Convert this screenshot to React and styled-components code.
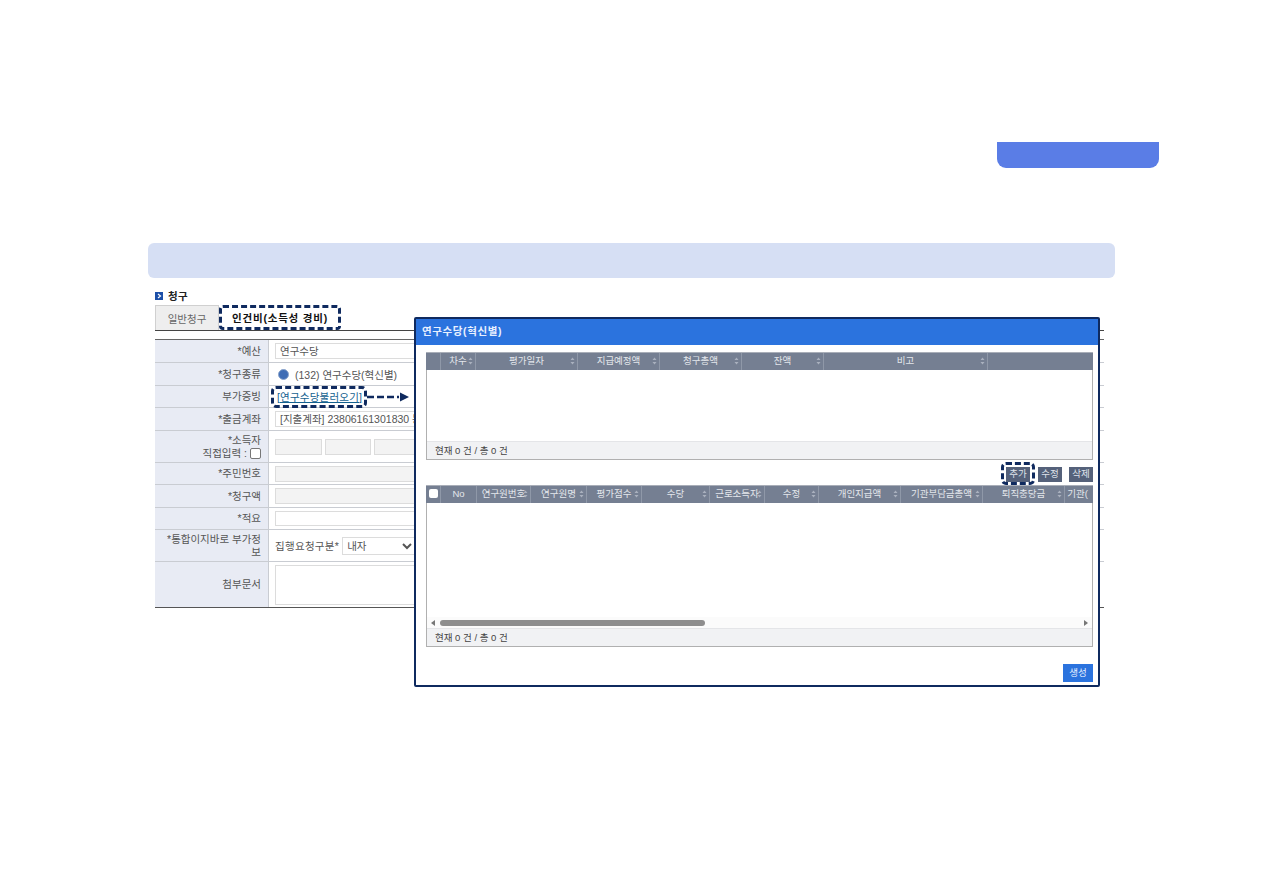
import React from 'react';
import styled, { createGlobalStyle } from 'styled-components';

const GlobalStyle = createGlobalStyle`
  html, body {
    margin: 0;
    padding: 0;
    background: #fff;
  }
  body {
    font-family: "Liberation Sans", "Noto Sans CJK KR", sans-serif;
    font-size: 10px;
    color: #444;
  }
  * {
    box-sizing: border-box;
  }
`;

const Page = styled.div`
  width: 1263px;
  height: 893px;
  padding-top: 142px;
  overflow: hidden;
`;

const TopBadgeRow = styled.div`
  display: flex;
  justify-content: flex-end;
  padding-right: 104px;
`;

const TopBadge = styled.div`
  width: 162px;
  height: 26px;
  background: #5a7de6;
  border-radius: 0 0 9px 9px;
`;

const Banner = styled.div`
  width: 967px;
  height: 35px;
  margin: 75px 0 0 148px;
  background: #d6dff4;
  border-radius: 6px;
`;

const Content = styled.div`
  position: relative;
  width: 949px;
  margin: 12px 0 0 155px;
`;

const SectionTitle = styled.div`
  display: flex;
  align-items: center;
  gap: 5px;
  height: 11px;
  margin-bottom: 4px;
  font-size: 10.5px;
  font-weight: 700;
  letter-spacing: 0.4px;
  color: #222;
`;

const SectionMark = styled.span`
  display: flex;
  align-items: center;
  justify-content: center;
  width: 8px;
  height: 8px;
  background: #1c4fa8;
`;

const TabBar = styled.div`
  display: flex;
  height: 26px;
  border-bottom: 1px solid #444;
`;

const Tab = styled.div`
  width: 64px;
  height: 25px;
  padding-top: 5px;
  text-align: center;
  font-size: 10.5px;
  color: #666;
  background: #eeeeee;
  border: 1px solid #d0d0d0;
  border-bottom: 0;
`;

const ActiveTab = styled.div`
  width: 122px;
  height: 25px;
  padding-top: 4px;
  text-align: center;
  font-size: 10.5px;
  font-weight: 700;
  letter-spacing: 0.8px;
  color: #111;
  background: #fff;
  border: 3px dashed #0f2a5f;
  border-radius: 4px;
  line-height: 13px;
`;

const FormTable = styled.div`
  margin-top: 8px;
  border-top: 1px solid #666;
`;

const FormRow = styled.div`
  display: grid;
  grid-template-columns: 114px 1fr;
  height: ${(p) => p.$height}px;
  border-bottom: 1px solid ${(p) => (p.$last ? '#555' : '#c9ccd2')};
`;

const RowLabel = styled.div`
  display: flex;
  flex-direction: column;
  align-items: flex-end;
  justify-content: center;
  padding: 0 7px 0 4px;
  text-align: right;
  font-size: 10.5px;
  line-height: 13px;
  color: #555;
  background: #e8ebf4;
  border-right: 1px solid #c9ccd2;
`;

const RowValue = styled.div`
  display: flex;
  align-items: center;
  gap: 3px;
  padding: 0 6px;
  font-size: 10.5px;
  color: #555;
`;

const TextField = styled.div`
  flex: ${(p) => (p.$width ? `0 0 ${p.$width}px` : '1')};
  height: ${(p) => p.$height || 16}px;
  padding: 0 4px;
  line-height: ${(p) => (p.$height || 16) - 2}px;
  white-space: nowrap;
  font-size: 10.5px;
  color: #555;
  background: ${(p) => (p.$muted ? '#f3f3f3' : '#fff')};
  border: 1px solid #dcdcdc;
`;

const RadioDot = styled.span`
  width: 11px;
  height: 11px;
  margin: 0 3px 0 3px;
  border-radius: 50%;
  background: #3f6db5;
  border: 1px solid #8aa4cc;
`;

const Callout = styled.span`
  position: relative;
  display: inline-block;
  margin-right: ${(p) => p.$gap || 0}px;
  &::after {
    content: '';
    position: absolute;
    inset: ${(p) => p.$inset || '-5px'};
    border: 3px dashed #0f2a5f;
    border-radius: 5px;
    pointer-events: none;
  }
`;

const LinkText = styled.span`
  display: block;
  padding-left: 2px;
  font-size: 10.5px;
  line-height: 12px;
  letter-spacing: 0.2px;
  color: #14618f;
  text-decoration: underline;
`;

const FlowArrow = styled.svg`
  position: absolute;
  left: calc(100% + 5px);
  top: 0;
`;

const CheckBox = styled.span`
  display: inline-block;
  width: 11px;
  height: 11px;
  margin-left: 3px;
  vertical-align: -2px;
  background: #fff;
  border: 1px solid #777;
  border-radius: 2px;
`;

const SpacedText = styled.span`
  letter-spacing: 0.3px;
  white-space: nowrap;
`;

const SelectBox = styled.select`
  flex: none;
  width: 74px;
  height: 18px;
  font-family: inherit;
  font-size: 10.5px;
  color: #555;
  background: #fff;
  border: 1px solid #dcdcdc;
  padding: 0;
`;

const Dialog = styled.div`
  position: absolute;
  left: 259px;
  top: 27px;
  width: 686px;
  height: 370px;
  background: #fff;
  border: 2px solid #0f2a5f;
  border-radius: 2px;
`;

const DialogHeader = styled.div`
  height: 26px;
  padding: 4px 6px 0;
  font-size: 10.5px;
  font-weight: 700;
  letter-spacing: 0.6px;
  color: #e8f0ff;
  background: #2b73de;
`;

const DialogBody = styled.div`
  display: flex;
  flex-direction: column;
  padding: 7px 6px 0 10px;
`;

const GridBox = styled.div`
  width: 667px;
  border: 1px solid #b0b0b0;
  border-top: 0;
`;

const GridHead = styled.div`
  display: flex;
  height: 18px;
  margin: 0 -1px;
  background: #757f92;
  border-top: 1px solid #a9aeb8;
`;

const HeadCell = styled.div`
  position: relative;
  flex: 0 0 ${(p) => p.$width}px;
  padding: 1px 2px 0;
  overflow: hidden;
  white-space: nowrap;
  text-align: center;
  font-size: 9.5px;
  line-height: 13px;
  color: #e4e7ec;
  border-right: 1px solid ${(p) => (p.$plain ? 'transparent' : '#8f98a8')};
`;

const SortMark = styled.svg`
  position: absolute;
  right: 2px;
  top: 4px;
`;

const GridBody = styled.div`
  height: ${(p) => p.$height}px;
  background: #fff;
`;

const GridFooter = styled.div`
  height: 18px;
  padding-left: 8px;
  font-size: 9.5px;
  line-height: 17px;
  color: #444;
  background: #f1f2f4;
  border-top: 1px solid #e4e5e8;
`;

const GridToolbar = styled.div`
  display: flex;
  justify-content: flex-end;
  gap: 7px;
  width: 667px;
  margin: 7px 0 3px;
`;

const ToolButton = styled.div`
  width: 24px;
  height: 15px;
  text-align: center;
  font-size: 9.5px;
  line-height: 14px;
  color: #dfe3ea;
  background: #55617a;
`;

const HeadCheck = styled.span`
  display: block;
  width: 9px;
  height: 9px;
  margin: 2px 0 0 1px;
  background: #fff;
  border-radius: 2px;
`;

const ScrollTrack = styled.div`
  display: flex;
  align-items: center;
  height: 11px;
  padding: 0 4px;
  background: #fbfbfb;
`;

const ScrollThumb = styled.div`
  width: 265px;
  height: 6px;
  margin-left: 5px;
  background: #8e8e8e;
  border-radius: 3px;
`;

const ScrollArrow = styled.svg`
  flex: none;
  margin-left: ${(p) => (p.$end ? 'auto' : '0')};
`;

const DialogActions = styled.div`
  display: flex;
  justify-content: flex-end;
  width: 667px;
  margin-top: 17px;
`;

const PrimaryButton = styled.div`
  width: 30px;
  height: 18px;
  text-align: center;
  font-size: 9.5px;
  line-height: 17px;
  color: #e8f0ff;
  background: #2b73de;
`;

const summaryColumns = [
  { label: '', width: 15 },
  { label: '차수', width: 35, sort: true },
  { label: '평가일자', width: 102, sort: true },
  { label: '지급예정액', width: 82, sort: true },
  { label: '청구총액', width: 82, sort: true },
  { label: '잔액', width: 82, sort: true },
  { label: '비고', width: 164, sort: true },
  { label: '', width: 105, plain: true },
];

const detailColumns = [
  { check: true, width: 15 },
  { label: 'No', width: 36 },
  { label: '연구원번호', width: 54, sort: true },
  { label: '연구원명', width: 56, sort: true },
  { label: '평가점수', width: 55, sort: true },
  { label: '수당', width: 68, sort: true },
  { label: '근로소득자', width: 55, sort: true },
  { label: '수정', width: 54, sort: true },
  { label: '개인지급액', width: 82, sort: true },
  { label: '기관부담금총액', width: 82, sort: true },
  { label: '퇴직충당금', width: 82, sort: true },
  { label: '기관(', width: 26, plain: true },
];

const SortIcon = () => (
  <SortMark width="5" height="8" viewBox="0 0 5 8">
    <path d="M2.5 0.5 L4.5 3 H0.5 Z M2.5 7.5 L0.5 5 H4.5 Z" fill="#aab1be" />
  </SortMark>
);

const HeadRow = ({ columns }) => (
  <GridHead>
    {columns.map((col, index) => (
      <HeadCell key={index} $width={col.width} $plain={col.plain}>
        {col.check ? <HeadCheck /> : col.label}
        {col.sort && <SortIcon />}
      </HeadCell>
    ))}
  </GridHead>
);

const App = () => (
  <>
    <GlobalStyle />
    <Page>
      <TopBadgeRow>
        <TopBadge />
      </TopBadgeRow>
      <Banner />
      <Content>
        <SectionTitle>
          <SectionMark>
            <svg width="6" height="6" viewBox="0 0 6 6">
              <path d="M2 1 L4.5 3 L2 5" fill="none" stroke="#fff" strokeWidth="1.2" />
            </svg>
          </SectionMark>
          청구
        </SectionTitle>
        <TabBar>
          <Tab>일반청구</Tab>
          <ActiveTab>인건비(소득성 경비)</ActiveTab>
        </TabBar>
        <FormTable>
          <FormRow $height={23}>
            <RowLabel>*예산</RowLabel>
            <RowValue>
              <TextField>연구수당</TextField>
            </RowValue>
          </FormRow>
          <FormRow $height={23}>
            <RowLabel>*청구종류</RowLabel>
            <RowValue>
              <RadioDot />
              (132) 연구수당(혁신별)
            </RowValue>
          </FormRow>
          <FormRow $height={22}>
            <RowLabel>부가증빙</RowLabel>
            <RowValue>
              <Callout $inset="-5px -5px -5px -4px">
                <LinkText>[연구수당불러오기]</LinkText>
                <FlowArrow width="44" height="12" viewBox="0 0 44 12">
                  <path d="M0 6 H32" stroke="#0f2a5f" strokeWidth="2.5" strokeDasharray="7 3" fill="none" />
                  <path d="M33 1.5 L42 6 L33 10.5 Z" fill="#0f2a5f" />
                </FlowArrow>
              </Callout>
            </RowValue>
          </FormRow>
          <FormRow $height={23}>
            <RowLabel>*출금계좌</RowLabel>
            <RowValue>
              <TextField>[지출계좌] 23806161301830 동</TextField>
            </RowValue>
          </FormRow>
          <FormRow $height={32}>
            <RowLabel>
              <span>*소득자</span>
              <span>
                직접입력 :<CheckBox />
              </span>
            </RowLabel>
            <RowValue>
              <TextField $muted $width={47} />
              <TextField $muted $width={46} />
              <TextField $muted />
            </RowValue>
          </FormRow>
          <FormRow $height={22}>
            <RowLabel>*주민번호</RowLabel>
            <RowValue>
              <TextField $muted />
            </RowValue>
          </FormRow>
          <FormRow $height={23}>
            <RowLabel>*청구액</RowLabel>
            <RowValue>
              <TextField $muted />
            </RowValue>
          </FormRow>
          <FormRow $height={22}>
            <RowLabel>*적요</RowLabel>
            <RowValue>
              <TextField $height={15} />
            </RowValue>
          </FormRow>
          <FormRow $height={32}>
            <RowLabel>*통합이지바로 부가정보</RowLabel>
            <RowValue>
              <SpacedText>집행요청구분*</SpacedText>
              <SelectBox defaultValue="내자">
                <option>내자</option>
              </SelectBox>
            </RowValue>
          </FormRow>
          <FormRow $height={46} $last>
            <RowLabel>첨부문서</RowLabel>
            <RowValue>
              <TextField $height={40} />
            </RowValue>
          </FormRow>
        </FormTable>

        <Dialog>
          <DialogHeader>연구수당(혁신별)</DialogHeader>
          <DialogBody>
            <GridBox>
              <HeadRow columns={summaryColumns} />
              <GridBody $height={71} />
              <GridFooter>현재 0 건 / 총 0 건</GridFooter>
            </GridBox>
            <GridToolbar>
              <Callout $gap={1} $inset="-5px -5px -3px -5px">
                <ToolButton>추가</ToolButton>
              </Callout>
              <ToolButton>수정</ToolButton>
              <ToolButton>삭제</ToolButton>
            </GridToolbar>
            <GridBox>
              <HeadRow columns={detailColumns} />
              <GridBody $height={114} />
              <ScrollTrack>
                <ScrollArrow width="4" height="6" viewBox="0 0 4 6">
                  <path d="M4 0 L0 3 L4 6 Z" fill="#777" />
                </ScrollArrow>
                <ScrollThumb />
                <ScrollArrow $end width="4" height="6" viewBox="0 0 4 6">
                  <path d="M0 0 L4 3 L0 6 Z" fill="#777" />
                </ScrollArrow>
              </ScrollTrack>
              <GridFooter>현재 0 건 / 총 0 건</GridFooter>
            </GridBox>
            <DialogActions>
              <PrimaryButton>생성</PrimaryButton>
            </DialogActions>
          </DialogBody>
        </Dialog>
      </Content>
    </Page>
  </>
);

export default App;
